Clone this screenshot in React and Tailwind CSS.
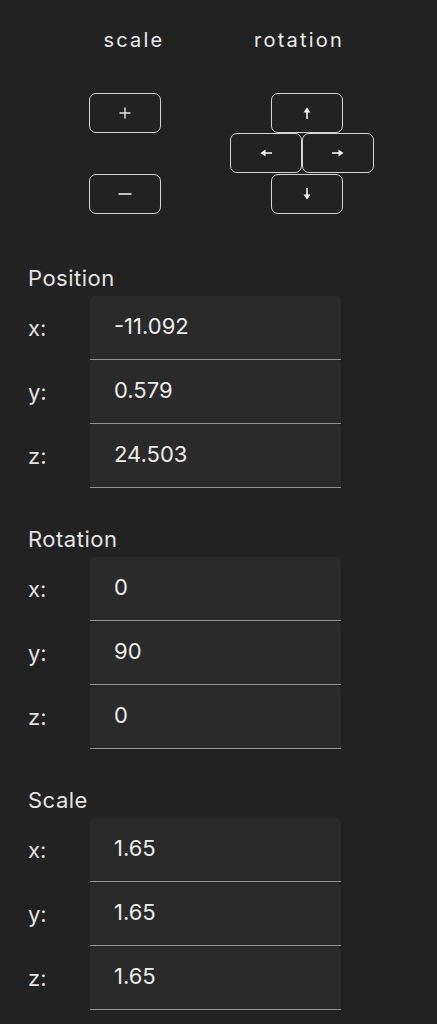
import React from "react";

const font = { fontFamily: "Inter, 'Noto Sans', sans-serif" };

function Arrow({ dir }) {
  const rot = { up: 0, right: 90, down: 180, left: 270 }[dir];
  return (
    <svg width="12" height="12" viewBox="0 0 12 12" style={{ transform: `rotate(${rot}deg)` }}>
      <path d="M6 0.5 L9.5 5.5 L2.5 5.5 Z" fill="#f2f2f2" />
      <rect x="5.2" y="4" width="1.6" height="8" fill="#f2f2f2" />
    </svg>
  );
}

function Btn({ children, className = "" }) {
  return (
    <button
      className={`w-[72px] h-[40px] rounded-[7px] border-[1.5px] border-[#d4d4d4] bg-[#222222] flex items-center justify-center ${className}`}
    >
      {children}
    </button>
  );
}

function Field({ label, value }) {
  return (
    <div className="flex items-center h-[64px]">
      <div className="w-[62px] text-[22px] text-[#e4e4e4] leading-[28px]">{label}</div>
      <div className="w-[251px] h-[64px] bg-[#2a2a2a] rounded-t-[5px] border-b-[1.5px] border-[#939393] flex items-center pl-[24px] pb-[3px]">
        <span className="text-[22px] text-[#ececec] leading-[28px]">{value}</span>
      </div>
    </div>
  );
}

function Section({ title, values, first }) {
  return (
    <div className={first ? "mt-[50px]" : "mt-[37px]"}>
      <div className="text-[22px] leading-[28px] text-[#e4e4e4] tracking-[0.5px] mb-[4px]">{title}</div>
      <Field label="x:" value={values[0]} />
      <Field label="y:" value={values[1]} />
      <Field label="z:" value={values[2]} />
    </div>
  );
}

export default function App() {
  return (
    <div className="w-[437px] min-h-[1024px] bg-[#222222] px-[28px] pt-[26px] overflow-hidden" style={font}>
      {/* labels */}
      <div className="flex text-[20px] leading-[28px] text-[#ececec] tracking-[2.2px]">
        <div className="w-[120px] ml-[46px] text-center">scale</div>
        <div className="w-[120px] ml-[45px] text-center">rotation</div>
      </div>

      {/* controls */}
      <div className="mt-[39px]">
        <div className="flex">
          <Btn className="ml-[61px]">
            <svg width="12" height="12" viewBox="0 0 12 12">
              <path d="M6 0.5 V11.5 M0.5 6 H11.5" stroke="#e8e8e8" strokeWidth="1.4" />
            </svg>
          </Btn>
          <Btn className="ml-[110px]">
            <Arrow dir="up" />
          </Btn>
        </div>
        <div className="flex">
          <Btn className="ml-[202px]">
            <Arrow dir="left" />
          </Btn>
          <Btn>
            <Arrow dir="right" />
          </Btn>
        </div>
        <div className="flex mt-[1px]">
          <Btn className="ml-[61px]">
            <svg width="14" height="4" viewBox="0 0 14 4">
              <path d="M0.5 2 H13.5" stroke="#e8e8e8" strokeWidth="1.6" />
            </svg>
          </Btn>
          <Btn className="ml-[110px]">
            <Arrow dir="down" />
          </Btn>
        </div>
      </div>

      <Section first title="Position" values={["-11.092", "0.579", "24.503"]} />
      <Section title="Rotation" values={["0", "90", "0"]} />
      <Section title="Scale" values={["1.65", "1.65", "1.65"]} />
    </div>
  );
}
